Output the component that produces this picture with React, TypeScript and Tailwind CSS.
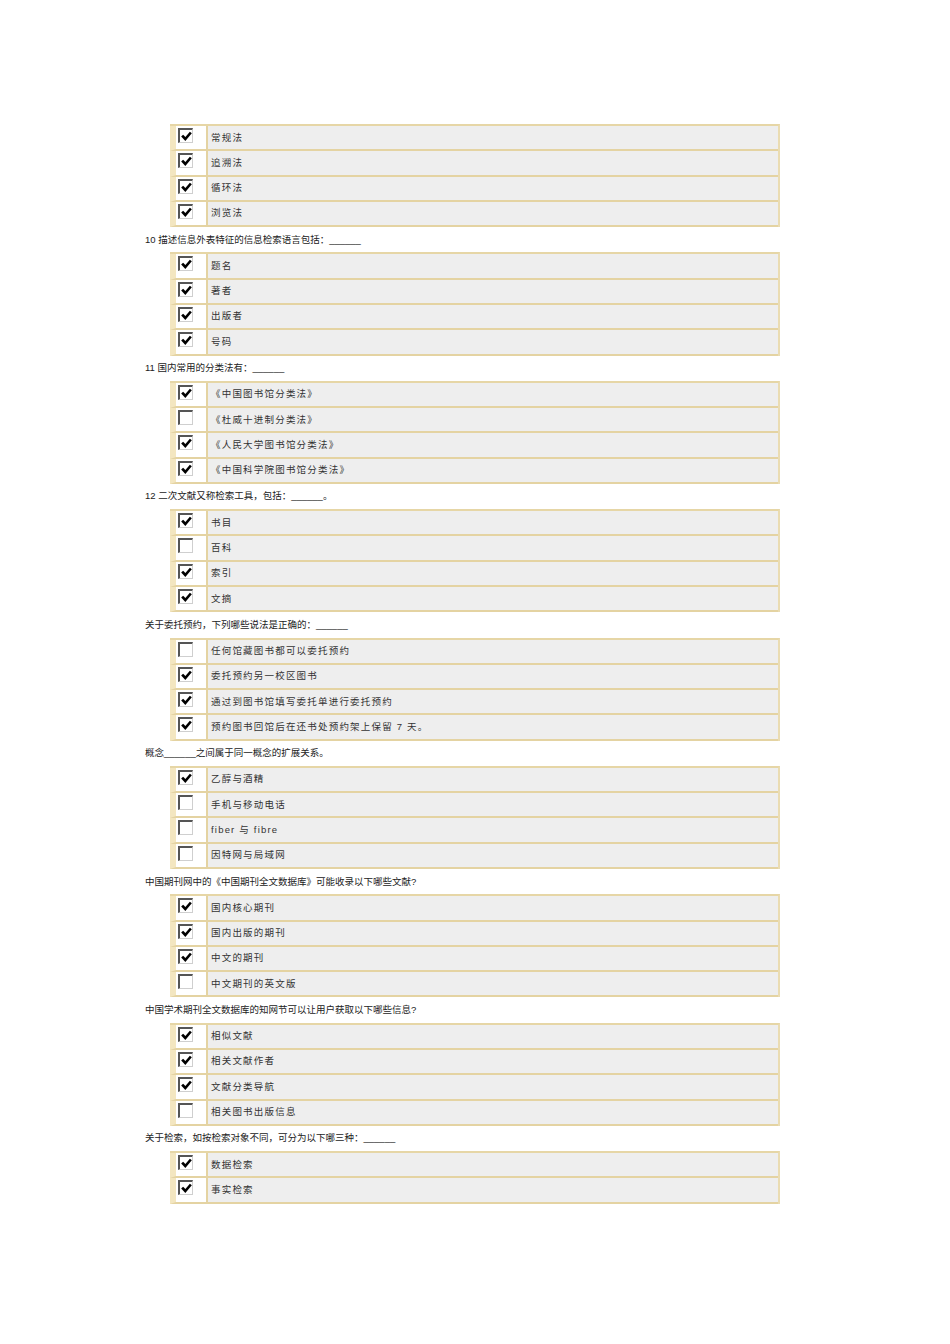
const blocks: { q?: string; opts: [string, boolean][] }[] = [
  { opts: [["常规法", true], ["追溯法", true], ["循环法", true], ["浏览法", true]] },
  {
    q: "10 描述信息外表特征的信息检索语言包括：______",
    opts: [["题名", true], ["著者", true], ["出版者", true], ["号码", true]],
  },
  {
    q: "11 国内常用的分类法有：______",
    opts: [
      ["《中国图书馆分类法》", true],
      ["《杜威十进制分类法》", false],
      ["《人民大学图书馆分类法》", true],
      ["《中国科学院图书馆分类法》", true],
    ],
  },
  {
    q: "12 二次文献又称检索工具，包括：______。",
    opts: [["书目", true], ["百科", false], ["索引", true], ["文摘", true]],
  },
  {
    q: "关于委托预约，下列哪些说法是正确的：______",
    opts: [
      ["任何馆藏图书都可以委托预约", false],
      ["委托预约另一校区图书", true],
      ["通过到图书馆填写委托单进行委托预约", true],
      ["预约图书回馆后在还书处预约架上保留 7 天。", true],
    ],
  },
  {
    q: "概念______之间属于同一概念的扩展关系。",
    opts: [["乙醇与酒精", true], ["手机与移动电话", false], ["fiber 与 fibre", false], ["因特网与局域网", false]],
  },
  {
    q: "中国期刊网中的《中国期刊全文数据库》可能收录以下哪些文献?",
    opts: [["国内核心期刊", true], ["国内出版的期刊", true], ["中文的期刊", true], ["中文期刊的英文版", false]],
  },
  {
    q: "中国学术期刊全文数据库的知网节可以让用户获取以下哪些信息?",
    opts: [["相似文献", true], ["相关文献作者", true], ["文献分类导航", true], ["相关图书出版信息", false]],
  },
  {
    q: "关于检索，如按检索对象不同，可分为以下哪三种：______",
    opts: [["数据检索", true], ["事实检索", true]],
  },
];

const Box = ({ checked }: { checked: boolean }) => (
  <div className="w-[15px] h-[15px] bg-white border-t-2 border-l-2 border-t-[#555] border-l-[#555] border-r border-b border-r-[#cfcfcf] border-b-[#cfcfcf] flex items-center justify-center">
    {checked && (
      <svg width="11" height="10" viewBox="0 0 11 10">
        <path d="M2 5.5 L4.3 8 L9 2.5" fill="none" stroke="#000" strokeWidth="2.6" strokeLinecap="square" />
      </svg>
    )}
  </div>
);

export default function App() {
  return (
    <div
      className="w-[950px] min-h-[1344px] bg-white pt-[124px] pl-[145px]"
      style={{ fontFamily: '"Liberation Sans", "Noto Sans CJK SC", sans-serif' }}
    >
      {blocks.map((b, i) => (
        <div key={i}>
          {b.q && (
            <div className="h-[25.2px] flex items-center text-[9.5px] text-[#222]">{b.q}</div>
          )}
          <div className="ml-[25px] w-[610px] border-t-2 border-t-[#e6d6a6] border-r-2 border-r-[#eadcb2]">
            {b.opts.map(([t, c], j) => (
              <div
                key={j}
                className="flex h-[25.3px] border-b-2 border-b-[#e4d3a2] border-l-[6px] border-l-[#f3e6c0]"
              >
                <div className="w-[30px] bg-white pt-[2px] pl-[2px] flex items-start">
                  <Box checked={c} />
                </div>
                <div className="flex-1 bg-[#eeeeee] border-l-2 border-l-[#e4d3a2] flex items-center pl-[3px] text-[9.5px] text-[#333] tracking-[1.2px]">
                  {t}
                </div>
              </div>
            ))}
          </div>
        </div>
      ))}
    </div>
  );
}
